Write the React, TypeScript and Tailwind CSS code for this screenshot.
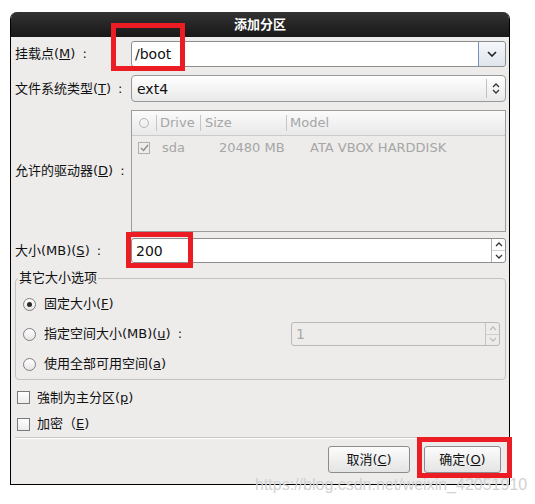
import React from "react";

function ChevDown({ color = "#222" }: { color?: string }) {
  return (
    <svg width="10" height="6" viewBox="0 0 10 6">
      <path d="M1 1l4 4 4-4" stroke={color} strokeWidth="1.6" fill="none" />
    </svg>
  );
}

function UpDown() {
  return (
    <svg width="8" height="13" viewBox="0 0 8 13">
      <path d="M1 5l3-3 3 3M1 8l3 3 3-3" stroke="#333" strokeWidth="1.3" fill="none" />
    </svg>
  );
}

function SpinCol({ disabled = false }: { disabled?: boolean }) {
  const c = disabled ? "#bdbdbd" : "#333";
  return (
    <div className={disabled ? "w-[14px] flex flex-col border-l border-[#c4c4c4]" : "w-[14px] flex flex-col border-l border-[#b0b0b0]"}>
      <div className="flex-1 flex items-center justify-center border-b border-[#cfcfcf]">
        <svg width="8" height="5" viewBox="0 0 8 5">
          <path d="M1 4l3-3 3 3" stroke={c} strokeWidth="1.3" fill="none" />
        </svg>
      </div>
      <div className="flex-1 flex items-center justify-center">
        <svg width="8" height="5" viewBox="0 0 8 5">
          <path d="M1 1l3 3 3-3" stroke={c} strokeWidth="1.3" fill="none" />
        </svg>
      </div>
    </div>
  );
}

function Radio({ checked = false }: { checked?: boolean }) {
  return (
    <div className="w-[13px] h-[13px] rounded-full border border-[#7f7f7f] bg-linear-to-b from-white to-[#e6e6e6] flex items-center justify-center shrink-0">
      {checked && <div className="w-[5px] h-[5px] rounded-full bg-[#2a2a2a]" />}
    </div>
  );
}

function Check() {
  return <div className="w-[13px] h-[13px] border border-[#7a7a7a] bg-linear-to-b from-white to-[#ececec] shrink-0" />;
}

function Colon() {
  return <span className="ml-[7px]">:</span>;
}

export default function App() {
  return (
    <div className="relative w-[535px] h-[504px] bg-white pl-[10px] pt-[12px] font-['DejaVu_Sans','Noto_Sans_CJK_SC',sans-serif] text-[13px] text-[#111111] leading-[16px]">
      <div className="w-[500px] h-[473px] flex flex-col rounded-t-[7px] overflow-hidden bg-[#edeceb] border-x border-b border-black">
        <div className="h-[25px] shrink-0 flex items-center justify-center bg-linear-to-b from-[#333333] to-[#181818] text-white font-bold text-[13px]">
          添加分区
        </div>
        <div className="flex-1 flex flex-col pl-[4px] pr-[3px]">
          {/* mount point */}
          <div className="mt-[4px] h-[26px] flex items-center">
            <div className="w-[116px]">挂载点(<u>M</u>)<Colon /></div>
            <div className="w-[375px] h-[26px] flex rounded-[3px] border border-[#8e8e8e] bg-white overflow-hidden">
              <div className="flex-1 flex items-center pl-[3px] text-[14px]">/boot</div>
              <div className="w-[28px] -my-[1px] -mr-[1px] flex items-center justify-center rounded-r-[3px] border border-[#6f92bf] bg-linear-to-b from-[#f6f8fb] to-[#dfe5ec]">
                <ChevDown />
              </div>
            </div>
          </div>
          {/* fs type */}
          <div className="mt-[8px] h-[27px] flex items-center">
            <div className="w-[116px]">文件系统类型(<u>T</u>)<Colon /></div>
            <div className="w-[375px] h-[27px] flex items-center rounded-[4px] border border-[#999999] bg-linear-to-b from-white to-[#e9e9e9]">
              <div className="flex-1 pl-[5px] text-[14px]">ext4</div>
              <div className="w-px h-[19px] bg-[#c2c2c2]" />
              <div className="w-[18px] flex items-center justify-center">
                <UpDown />
              </div>
            </div>
          </div>
          {/* drives */}
          <div className="mt-[8px] h-[122px] flex items-center">
            <div className="w-[116px]">允许的驱动器(<u>D</u>)<Colon /></div>
            <div className="w-[375px] h-[122px] border border-[#9c9c9c] bg-[#edeceb] flex flex-col text-[#a6a6a6]">
              <div className="h-[25px] flex items-center bg-linear-to-b from-[#fbfbfb] to-[#e9e9e9] border-b border-[#cbcbcb]">
                <div className="w-[24px] flex items-center justify-center">
                  <div className="w-[10px] h-[10px] rounded-full border border-[#b5b5b5]" />
                </div>
                <div className="w-px h-[16px] bg-[#c6c6c6]" />
                <div className="w-[43px] pl-[3px]">Drive</div>
                <div className="w-px h-[16px] bg-[#c6c6c6]" />
                <div className="w-[85px] pl-[4px]">Size</div>
                <div className="w-px h-[16px] bg-[#c6c6c6]" />
                <div className="flex-1 pl-[3px]">Model</div>
              </div>
              <div className="h-[24px] flex items-center">
                <div className="w-[30px] pl-[6px]">
                  <div className="w-[12px] h-[12px] border border-[#b0b0b0] flex items-center justify-center">
                    <svg width="9" height="8" viewBox="0 0 9 8">
                      <path d="M1 4l2.5 2.5L8 1" stroke="#8c8c8c" strokeWidth="1.4" fill="none" />
                    </svg>
                  </div>
                </div>
                <div className="w-[57px]">sda</div>
                <div className="w-[91px]">20480 MB</div>
                <div className="flex-1">ATA VBOX HARDDISK</div>
              </div>
            </div>
          </div>
          {/* size */}
          <div className="mt-[6px] h-[25px] flex items-center">
            <div className="w-[116px]">大小(MB)(<u>S</u>)<Colon /></div>
            <div className="w-[375px] h-[25px] flex rounded-[3px] border border-[#8e8e8e] bg-white overflow-hidden">
              <div className="flex-1 flex items-center pl-[4px] text-[14px]">200</div>
              <SpinCol />
            </div>
          </div>
          {/* other size options */}
          <fieldset className="mt-[7px] w-[491px] h-[110px] border border-[#c3c2c0] rounded-[4px] flex flex-col">
            <legend className="ml-[2px] px-[1px] leading-[16px]">其它大小选项</legend>
            <div className="mt-[3px] h-[30px] flex items-center pl-[7px]">
              <Radio checked />
              <div className="ml-[8px]">固定大小(<u>F</u>)</div>
            </div>
            <div className="h-[30px] flex items-center pl-[7px]">
              <Radio />
              <div className="ml-[8px]">指定空间大小(MB)(<u>u</u>)<Colon /></div>
              <div className="ml-auto mr-[5px] w-[209px] h-[24px] flex rounded-[3px] border border-[#b9b9b9] bg-[#edeceb] overflow-hidden">
                <div className="flex-1 flex items-center pl-[4px] text-[14px] text-[#a8a8a8]">1</div>
                <SpinCol disabled />
              </div>
            </div>
            <div className="h-[30px] flex items-center pl-[7px]">
              <Radio />
              <div className="ml-[8px]">使用全部可用空间(<u>a</u>)</div>
            </div>
          </fieldset>
          {/* checkboxes */}
          <div className="mt-[4px] h-[27px] flex items-center pl-[2px]">
            <Check />
            <div className="ml-[7px]">強制为主分区(<u>p</u>)</div>
          </div>
          <div className="h-[26px] flex items-center pl-[2px]">
            <Check />
            <div className="ml-[7px]">加密（<u>E</u>)</div>
          </div>
          <div className="h-px bg-[#c6c5c3]" />
          <div className="h-px bg-white" />
          {/* buttons */}
          <div className="mt-[7px] flex justify-end gap-[14px] pr-[5px]">
            <div className="w-[82px] h-[27px] flex items-center justify-center rounded-[3px] border border-[#8c8c8c] bg-linear-to-b from-[#fcfcfc] to-[#e4e4e4]">
              取消(<u>C</u>)
            </div>
            <div className="w-[77px] h-[27px] flex items-center justify-center rounded-[3px] border border-[#8c8c8c] bg-linear-to-b from-[#fcfcfc] to-[#e4e4e4]">
              确定(<u>O</u>)
            </div>
          </div>
        </div>
      </div>

      {/* annotation overlays */}
      <div className="absolute left-[111px] top-[23px] w-[74px] h-[48px] border-[5px] border-[#ec1c24]" />
      <div className="absolute left-[126px] top-[232px] w-[67px] h-[36px] border-[5px] border-[#ec1c24]" />
      <div className="absolute left-[417px] top-[437px] w-[95px] h-[41px] border-[5px] border-[#ec1c24]" />
      <div className="absolute left-[255px] top-[476px] font-['Liberation_Sans',sans-serif] text-[16px] leading-[18px] text-[#d2d2d2]">
        https://blog.csdn.net/weixin_42051910
      </div>
    </div>
  );
}
